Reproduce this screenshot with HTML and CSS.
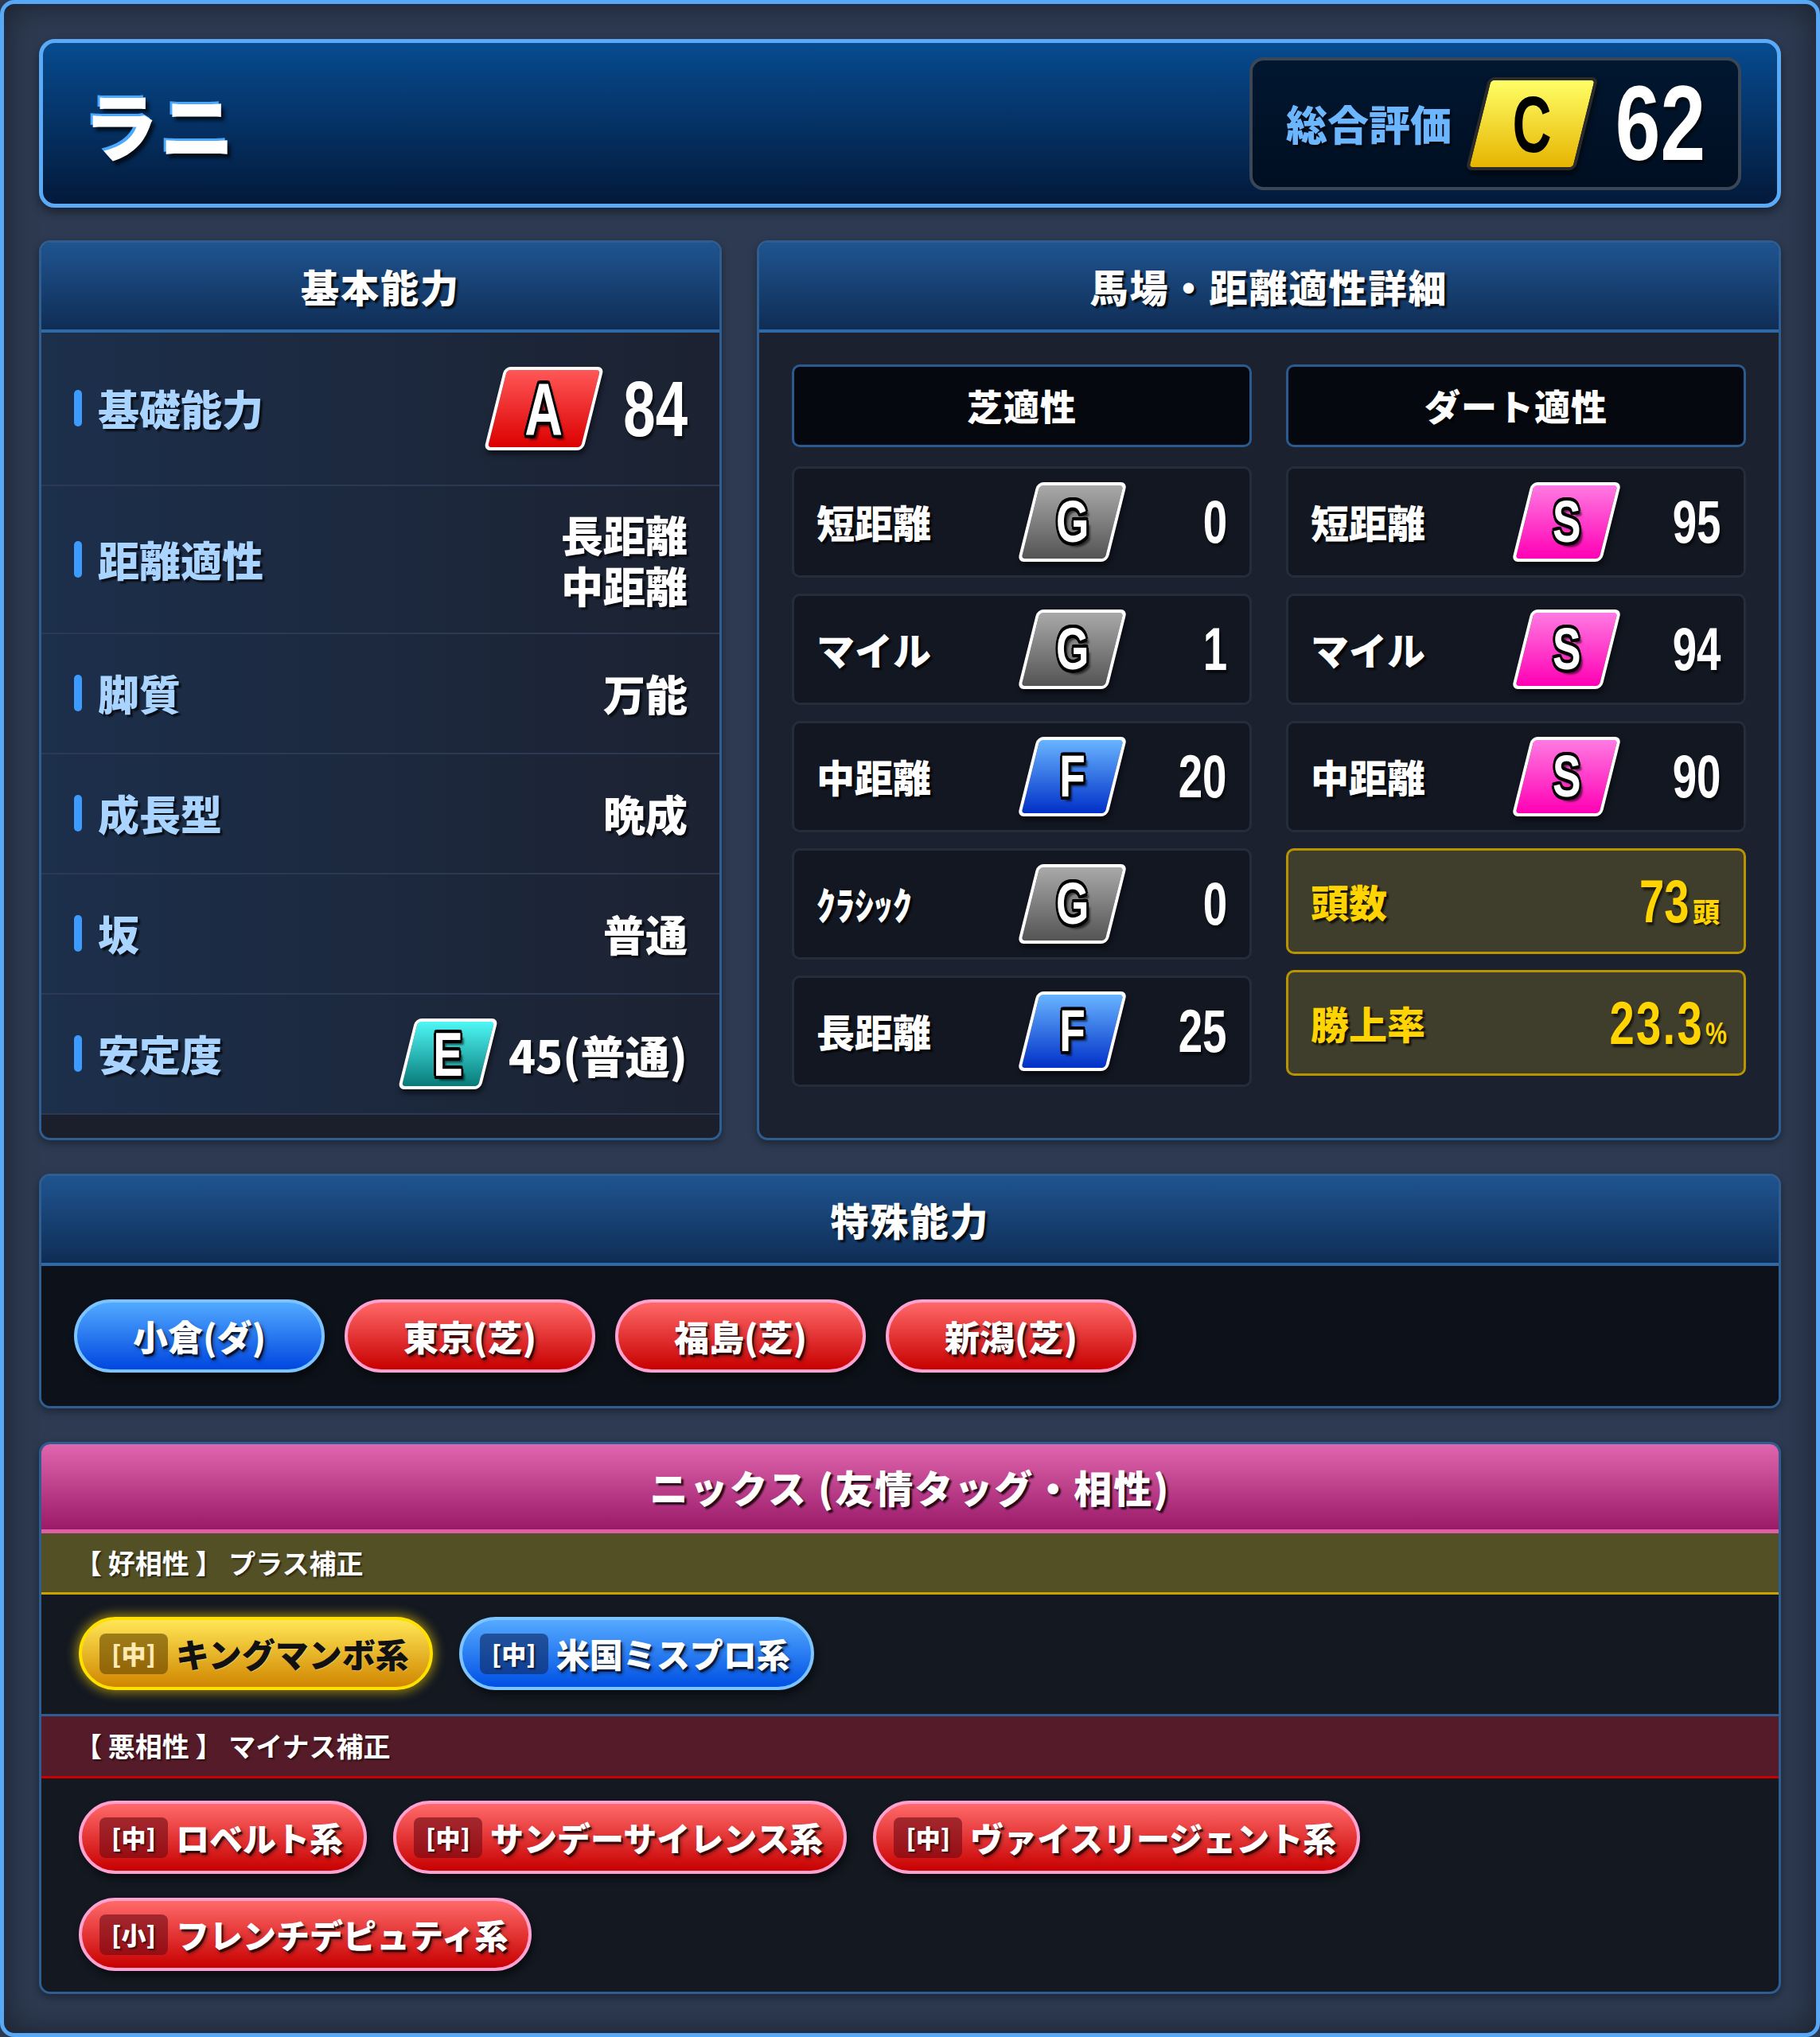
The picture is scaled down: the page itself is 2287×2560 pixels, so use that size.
FILE: index.html
```html
<!DOCTYPE html>
<html lang="ja">
<head>
<meta charset="utf-8">
<title>ラニ</title>
<link rel="stylesheet" href="styles.css">
</head>
<body>
<div class="frame">
  <header class="hero">
    <h1 class="name">ラニ</h1>
    <div class="overall">
      <span class="overall-label">総合評価</span>
      <span class="rank rank-xl r-c"><span class="rank-l">C</span></span>
      <span class="num num-xl">62</span>
    </div>
  </header>

  <div class="top-grid">
    <section class="panel basic">
      <h2 class="panel-head">基本能力</h2>
      <div class="brows">
        <div class="brow brow-first">
          <span class="blabel">基礎能力</span>
          <span class="vrank">
            <span class="rank rank-lg r-a"><span class="rank-l">A</span></span>
            <span class="num num-lg">84</span>
          </span>
        </div>
        <div class="brow">
          <span class="blabel">距離適性</span>
          <span class="bval bval-multi">長距離
中距離</span>
        </div>
        <div class="brow">
          <span class="blabel">脚質</span>
          <span class="bval">万能</span>
        </div>
        <div class="brow">
          <span class="blabel">成長型</span>
          <span class="bval">晩成</span>
        </div>
        <div class="brow">
          <span class="blabel">坂</span>
          <span class="bval">普通</span>
        </div>
        <div class="brow">
          <span class="blabel">安定度</span>
          <span class="vrank vrank-e">
            <span class="rank rank-md r-e"><span class="rank-l">E</span></span>
            <span class="bval bval-e">45(普通)</span>
          </span>
        </div>
      </div>
    </section>

    <section class="panel apt">
      <h2 class="panel-head">馬場・距離適性詳細</h2>
      <div class="apt-body">
        <div class="apt-col">
          <div class="col-head">芝適性</div>
          <div class="apt-row"><span class="apt-label">短距離</span><span class="rank rank-sm r-g"><span class="rank-l">G</span></span><span class="apt-val"><span class="num num-md">0</span></span></div>
          <div class="apt-row"><span class="apt-label">マイル</span><span class="rank rank-sm r-g"><span class="rank-l">G</span></span><span class="apt-val"><span class="num num-md">1</span></span></div>
          <div class="apt-row"><span class="apt-label">中距離</span><span class="rank rank-sm r-f"><span class="rank-l">F</span></span><span class="apt-val"><span class="num num-md">20</span></span></div>
          <div class="apt-row"><span class="apt-label">ｸﾗｼｯｸ</span><span class="rank rank-sm r-g"><span class="rank-l">G</span></span><span class="apt-val"><span class="num num-md">0</span></span></div>
          <div class="apt-row"><span class="apt-label">長距離</span><span class="rank rank-sm r-f"><span class="rank-l">F</span></span><span class="apt-val"><span class="num num-md">25</span></span></div>
        </div>
        <div class="apt-col">
          <div class="col-head">ダート適性</div>
          <div class="apt-row"><span class="apt-label">短距離</span><span class="rank rank-sm r-s"><span class="rank-l">S</span></span><span class="apt-val"><span class="num num-md">95</span></span></div>
          <div class="apt-row"><span class="apt-label">マイル</span><span class="rank rank-sm r-s"><span class="rank-l">S</span></span><span class="apt-val"><span class="num num-md">94</span></span></div>
          <div class="apt-row"><span class="apt-label">中距離</span><span class="rank rank-sm r-s"><span class="rank-l">S</span></span><span class="apt-val"><span class="num num-md">90</span></span></div>
          <div class="sum-box"><span class="sum-label">頭数</span><span class="sum-val"><span class="num num-sum">73</span><span class="sum-unit">頭</span></span></div>
          <div class="sum-box"><span class="sum-label">勝上率</span><span class="sum-val"><span class="num num-sum num-rate">23.3</span><span class="num sum-pct">%</span></span></div>
        </div>
      </div>
    </section>
  </div>

  <section class="panel special">
    <h2 class="panel-head">特殊能力</h2>
    <div class="special-body">
      <span class="spill spill-blue">小倉(ダ)</span>
      <span class="spill spill-red">東京(芝)</span>
      <span class="spill spill-red">福島(芝)</span>
      <span class="spill spill-red">新潟(芝)</span>
    </div>
  </section>

  <section class="panel nicks">
    <h2 class="panel-head nicks-head">ニックス (友情タッグ・相性)</h2>
    <div class="band band-good">【 好相性 】 プラス補正</div>
    <div class="nick-body nick-body-good">
      <span class="npill npill-gold"><span class="tag">[中]</span>キングマンボ系</span>
      <span class="npill npill-blue"><span class="tag">[中]</span>米国ミスプロ系</span>
    </div>
    <div class="band band-bad">【 悪相性 】 マイナス補正</div>
    <div class="nick-body nick-body-bad">
      <span class="npill npill-red"><span class="tag">[中]</span>ロベルト系</span>
      <span class="npill npill-red"><span class="tag">[中]</span>サンデーサイレンス系</span>
      <span class="npill npill-red"><span class="tag">[中]</span>ヴァイスリージェント系</span>
      <span class="npill npill-red"><span class="tag">[小]</span>フレンチデピュティ系</span>
    </div>
  </section>
</div>
</body>
</html>
```

FILE: styles.css
```css
* { box-sizing: border-box; margin: 0; padding: 0; }

html, body {
  background: #2d3a51;
}

body {
  width: 2287px;
  font-family: "Noto Sans CJK JP", "Noto Sans", sans-serif;
  font-weight: 900;
  color: #fff;
  line-height: 1.2;
}

.frame {
  width: 2287px;
  min-height: 2560px;
  border: 5px solid #58a8f8;
  border-radius: 18px;
  background: #2d3a51;
  box-shadow: inset 0 0 40px rgba(0, 0, 0, .45);
  padding: 44px 44px 44px;
  display: flex;
  flex-direction: column;
  gap: 42px;
}

/* ---------- hero ---------- */
.hero {
  height: 212px;
  border: 5px solid #5aaaf7;
  border-radius: 20px;
  background: linear-gradient(#064b90, #03193a);
  box-shadow: 0 6px 12px rgba(0, 0, 0, .4);
  display: flex;
  align-items: center;
  justify-content: space-between;
  padding: 0 45px 0 51px;
  margin-bottom: -1px;
}

.name {
  font-size: 94px;
  font-weight: 900;
  line-height: 1;
  letter-spacing: 2px;
  color: #fff;
  text-shadow: -3px -3px 0 #4aa8ff, 4px 5px 4px rgba(0, 0, 0, .7);
}

.overall {
  height: 167px;
  border: 4px solid #3b4757;
  border-radius: 18px;
  background: linear-gradient(#011730, #000f22);
  display: flex;
  align-items: center;
  padding: 0 41px 0 42px;
}

.overall-label {
  font-size: 52px;
  color: #6cb6ff;
  margin-right: 32px;
  line-height: 1;
  text-shadow: 2px 3px 2px rgba(0, 0, 0, .7);
}

/* ---------- rank badges ---------- */
.rank {
  display: inline-flex;
  align-items: center;
  justify-content: center;
  flex: none;
  transform: skewX(-14deg);
  border: 4px solid #fff;
  border-radius: 8px;
  box-shadow: 3px 5px 6px rgba(0, 0, 0, .55);
}

.rank-l {
  display: inline-block;
  transform: skewX(14deg) scaleX(.72);
  font-family: "Liberation Sans", "DejaVu Sans", sans-serif;
  font-weight: 700;
  line-height: 1;
  color: #fff;
  text-shadow:
    -3px -3px 0 #000, 3px -3px 0 #000, -3px 3px 0 #000, 3px 3px 0 #000,
    0 -4px 0 #000, 0 4px 0 #000, -4px 0 0 #000, 4px 0 0 #000,
    -2px -4px 0 #000, 2px -4px 0 #000, -2px 4px 0 #000, 2px 4px 0 #000,
    6px 6px 3px rgba(0, 0, 0, .6);
}

.rank-xl { width: 138px; height: 117px; border-color: #2b2b2b; }
.rank-xl .rank-l { font-size: 100px; color: #000; text-shadow: none; transform: skewX(14deg) scaleX(.68); }
.rank-lg { width: 125px; height: 105px; margin: 15px 0; }
.rank-lg .rank-l { font-size: 92px; }
.rank-md { width: 104px; height: 89px; }
.rank-md .rank-l { font-size: 78px; }
.rank-sm { width: 113px; height: 100px; }
.rank-sm .rank-l { font-size: 74px; }

.r-c { background: linear-gradient(#ffff66, #e6b400); }
.r-a { background: linear-gradient(#ff5757, #dc0000); }
.r-e { background: linear-gradient(#4ef7f5, #087a78); }
.r-g { background: linear-gradient(#a9a9a9, #545454); }
.r-f { background: linear-gradient(#68b4ff, #0030c8); }
.r-s { background: linear-gradient(#ff7ae2, #ff00b4); }

/* ---------- numbers ---------- */
.num {
  display: inline-block;
  font-family: "Liberation Sans", "DejaVu Sans", sans-serif;
  font-weight: 700;
  line-height: 1;
  transform: scaleX(.74);
  transform-origin: right center;
  color: #fff;
  text-shadow: 3px 4px 3px rgba(0, 0, 0, .6);
}

.num-xl { font-size: 134px; transform: scaleX(.76); }
.num-lg { font-size: 98px; }
.num-md { font-size: 76px; transform: scaleX(.72); }

/* ---------- panels ---------- */
.top-grid {
  display: grid;
  grid-template-columns: 2fr 3fr;
  gap: 44px;
}

.panel {
  border: 3px solid #2e5d91;
  border-radius: 14px;
  overflow: hidden;
  display: flex;
  flex-direction: column;
  box-shadow: 0 4px 10px rgba(0, 0, 0, .35);
}

.panel-head {
  height: 113px;
  flex: none;
  display: flex;
  align-items: center;
  justify-content: center;
  font-size: 48px;
  font-weight: 900;
  letter-spacing: 2px;
  background: linear-gradient(#1f5490, #0f2d55);
  border-bottom: 4px solid #2d6aa6;
  text-shadow: 3px 3px 2px rgba(0, 0, 0, .8);
}

/* basic */
.basic { background: #1a1f2b; }

.brow {
  display: flex;
  align-items: center;
  justify-content: space-between;
  min-height: 151px;
  padding: 28px 40px 28px 41px;
  border-bottom: 2px solid #2b3a52;
  background: linear-gradient(90deg, #1c2f4b, #1c2231);
}

.blabel {
  display: flex;
  align-items: center;
  gap: 20px;
  font-size: 52px;
  color: #a8d4ff;
  text-shadow: 3px 3px 2px rgba(0, 0, 0, .7);
}

.blabel::before {
  content: "";
  width: 10px;
  height: 46px;
  border-radius: 5px;
  background: #3d9bff;
}

.bval {
  font-size: 53px;
  text-align: right;
  text-shadow: 3px 3px 2px rgba(0, 0, 0, .7);
}

.bval-multi {
  white-space: pre-line;
  line-height: 64px;
}

.bval-e { font-size: 56px; }

.vrank {
  display: flex;
  align-items: center;
  gap: 9px;
}

.vrank-e { gap: 24px; }

/* aptitude */
.apt { background: #1c2130; }

.apt-body {
  padding: 40px 41px 64px;
  display: grid;
  grid-template-columns: 1fr 1fr;
  gap: 43px;
  align-items: start;
}

.apt-col {
  display: flex;
  flex-direction: column;
  gap: 20px;
}

.col-head {
  height: 104px;
  margin-bottom: 4px;
  background: #05080e;
  border: 3px solid #2a5a90;
  border-radius: 10px;
  display: flex;
  align-items: center;
  justify-content: center;
  font-size: 45px;
  letter-spacing: 1px;
  text-shadow: 3px 3px 2px rgba(0, 0, 0, .8);
}

.apt-row {
  height: 140px;
  display: grid;
  grid-template-columns: 1fr 113px 138px;
  align-items: center;
  padding: 0 28px;
  background: #121722;
  border: 3px solid #262d3a;
  border-radius: 10px;
}

.apt-label {
  font-size: 48px;
  text-shadow: 3px 3px 2px rgba(0, 0, 0, .8);
}

.apt-val { text-align: right; }

.sum-box {
  height: 133px;
  display: flex;
  align-items: center;
  justify-content: space-between;
  padding: 0 14px 0 28px;
  background: #3f3d2b;
  border: 3px solid #b89500;
  border-radius: 10px;
}

.sum-label {
  font-size: 48px;
  color: #ffd400;
  text-shadow: 3px 3px 2px rgba(0, 0, 0, .7);
}

.sum-val {
  display: flex;
  align-items: baseline;
  color: #ffd400;
}

.num-sum {
  font-size: 76px;
  color: #ffd400;
}

.num-rate { letter-spacing: 3px; }

.sum-unit {
  font-size: 34px;
  margin-left: 4px;
  margin-right: 16px;
  color: #ffd400;
  text-shadow: 2px 2px 2px rgba(0, 0, 0, .7);
}

.sum-pct {
  font-size: 38px;
  color: #ffd400;
  transform: scaleX(.8);
  transform-origin: left center;
  margin-left: 2px;
}

/* special */
.special-body {
  display: flex;
  gap: 25px;
  padding: 42px 41px;
  background: #0d1119;
}

.spill {
  width: 315px;
  height: 92px;
  border: 4px solid;
  border-radius: 46px;
  display: flex;
  align-items: center;
  justify-content: center;
  font-size: 44px;
  text-shadow: 2px 3px 0 rgba(0, 0, 0, .6), 3px 4px 4px rgba(0, 0, 0, .5);
  box-shadow: 3px 6px 8px rgba(0, 0, 0, .5);
}

.spill-blue { background: linear-gradient(#52aaff, #0046e0); border-color: #7cc4ff; }
.spill-red { background: linear-gradient(#ff6868, #c80000); border-color: #ffa2d2; }

/* nicks */
.nicks { background: #131821; }

.nicks-head {
  height: 112px;
  background: linear-gradient(#e066ae, #9a1a68);
  border-bottom: 5px solid #dd5fa8;
}

.band {
  height: 77px;
  display: flex;
  align-items: center;
  padding-left: 42px;
  font-size: 34px;
  font-weight: 700;
  color: #fff;
  text-shadow: 2px 2px 2px rgba(0, 0, 0, .5);
}

.band-good { background: #545026; border-bottom: 3px solid #c9a100; }
.band-bad { background: #561b28; border-bottom: 3px solid #cc0000; height: 78px; }

.nick-body {
  display: flex;
  flex-wrap: wrap;
  gap: 30px 33px;
  padding: 28px 41px 30px 47px;
}

.nick-body-good { border-bottom: 3px solid #2e5d91; }
.nick-body-bad { padding-bottom: 26px; }

.npill {
  height: 92px;
  display: inline-flex;
  align-items: center;
  gap: 10px;
  padding: 0 26px 0 22px;
  border: 4px solid;
  border-radius: 46px;
  font-size: 42px;
  text-shadow: 2px 3px 0 rgba(0, 0, 0, .6), 3px 4px 4px rgba(0, 0, 0, .45);
  box-shadow: 3px 6px 8px rgba(0, 0, 0, .5);
}

.tag {
  width: 86px;
  height: 51px;
  border-radius: 8px;
  display: flex;
  align-items: center;
  justify-content: center;
  font-size: 31px;
  font-weight: 900;
  color: #fff;
  text-shadow: 2px 2px 2px rgba(0, 0, 0, .6);
}

.npill-gold {
  background: linear-gradient(#ffe655, #d08600);
  border-color: #ffe000;
  color: #111;
  text-shadow: 1px 1px 0 rgba(255, 255, 255, .3);
  box-shadow: 0 0 14px 3px rgba(255, 215, 0, .55);
}

.npill-gold .tag { background: rgba(100, 66, 0, .6); color: #ffeab0; text-shadow: none; }

.npill-blue { background: linear-gradient(#55aaff, #0050e4); border-color: #7cc4ff; }
.npill-blue .tag { background: rgba(15, 45, 105, .65); }

.npill-red { background: linear-gradient(#ff6a6a, #c80000); border-color: #ffa2d2; }
.npill-red .tag { background: rgba(110, 10, 20, .6); }
```
